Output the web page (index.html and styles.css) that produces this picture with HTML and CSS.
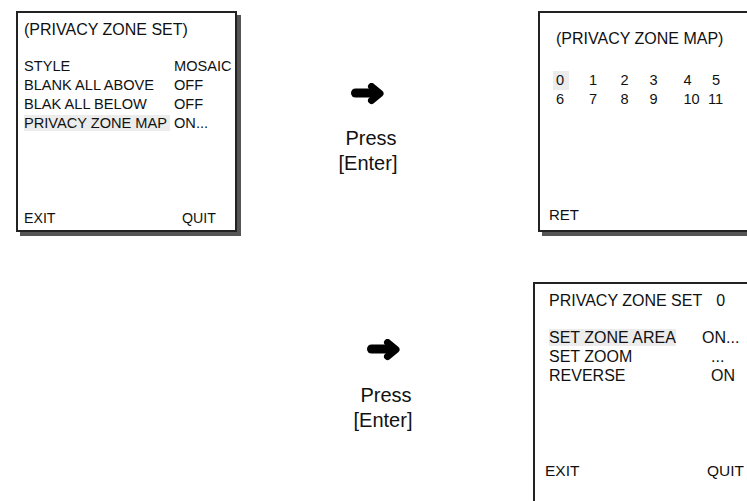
FILE: index.html
```html
<!DOCTYPE html>
<html>
<head>
<meta charset="utf-8">
<link rel="stylesheet" href="styles.css">
</head>
<body>
<div class="page">
  <div class="row row-top">
    <div class="box box-set">
      <div class="title">(PRIVACY ZONE SET)</div>
      <div class="menu">
        <span>STYLE</span><span>MOSAIC</span>
        <span>BLANK ALL ABOVE</span><span>OFF</span>
        <span>BLAK ALL BELOW</span><span>OFF</span>
        <span><span class="hl">PRIVACY ZONE MAP</span></span><span>ON...</span>
      </div>
      <div class="foot foot-set"><span>EXIT</span><span>QUIT</span></div>
    </div>

    <div class="mid mid-top">
      <svg class="arrow" width="34" height="22" viewBox="0 0 34 22">
        <line x1="4.5" y1="10" x2="26" y2="10" stroke="#000" stroke-width="9" stroke-linecap="round"/>
        <polyline points="20.5,3.5 29,10.5 20.5,17.5" fill="none" stroke="#000" stroke-width="7" stroke-linecap="round" stroke-linejoin="round"/>
      </svg>
      <div class="press">Press</div>
      <div class="enter">[Enter]</div>
    </div>

    <div class="box box-map">
      <div class="title title-map">(PRIVACY ZONE MAP)</div>
      <div class="grid">
        <span><span class="hl hl-cell">0</span></span><span>1</span><span>2</span><span>3</span><span>4</span><span>5</span>
        <span>6</span><span>7</span><span>8</span><span>9</span><span>10</span><span class="shift">11</span>
      </div>
      <div class="ret">RET</div>
    </div>
  </div>

  <div class="row row-bottom">
    <div class="mid mid-bottom">
      <svg class="arrow" width="34" height="22" viewBox="0 0 34 22">
        <line x1="4.5" y1="10" x2="26" y2="10" stroke="#000" stroke-width="9" stroke-linecap="round"/>
        <polyline points="20.5,3.5 29,10.5 20.5,17.5" fill="none" stroke="#000" stroke-width="7" stroke-linecap="round" stroke-linejoin="round"/>
      </svg>
      <div class="press">Press</div>
      <div class="enter">[Enter]</div>
    </div>

    <div class="box box-zone">
      <div class="zone-title"><span>PRIVACY ZONE SET</span><span class="zone-num">0</span></div>
      <div class="zone-menu">
        <span><span class="hl">SET ZONE AREA</span></span><span>ON...</span>
        <span>SET ZOOM</span><span class="v2">...</span>
        <span>REVERSE</span><span class="v2">ON</span>
      </div>
      <div class="foot foot-zone"><span>EXIT</span><span>QUIT</span></div>
    </div>
  </div>
</div>
</body>
</html>
```

FILE: styles.css
```css
html, body {
  margin: 0;
  padding: 0;
  background: #fff;
}
body {
  width: 747px;
  height: 501px;
  overflow: hidden;
  font-family: "Liberation Sans", Arial, sans-serif;
  color: #111;
}
.page {
  display: flex;
  flex-direction: column;
}
.row {
  display: flex;
  align-items: flex-start;
}
.row-top {
  padding: 11px 0 0 16px;
}
.row-bottom {
  margin-top: 50px;
  padding-left: 343px;
}
.box {
  box-sizing: border-box;
  border: 2px solid #222;
  box-shadow: 4px 4px 0 #555;
  background: #fff;
  display: flex;
  flex-direction: column;
  flex-shrink: 0;
}
.title {
  font-size: 16px;
  line-height: 19px;
}
.hl {
  background: #ececec;
}

/* box 1 */
.box-set {
  width: 221px;
  height: 221px;
  padding: 7px 0 2px 6px;
}
.menu {
  margin-top: 18px;
  display: grid;
  grid-template-columns: 150px auto;
  font-size: 14.6px;
  line-height: 19px;
}
.menu .hl {
  padding-right: 3px;
}
.foot {
  display: grid;
  line-height: 19px;
}
.foot-set {
  margin-top: auto;
  grid-template-columns: 158px auto;
  font-size: 14.2px;
}

/* middle */
.mid {
  width: 80px;
  display: flex;
  flex-direction: column;
  align-items: center;
  font-size: 20px;
  line-height: 25px;
  flex-shrink: 0;
}
.mid-top {
  margin-left: 91px;
  padding-top: 72px;
}
.mid-bottom {
  padding-top: 57px;
}
.arrow {
  display: block;
  margin-bottom: 21px;
}
.mid-bottom .arrow {
  margin-bottom: 22px;
  margin-left: 2px;
}
.press {
  margin-left: 6px;
}

/* box 2 */
.box-map {
  margin-left: 130px;
  width: 240px;
  height: 221px;
  padding: 16px 0 6px 16px;
}
.grid {
  margin-top: 23px;
  display: grid;
  grid-template-columns: 33px 31.5px 29px 34px 28.5px auto;
  font-size: 14.6px;
  line-height: 19px;
}
.hl-cell {
  display: inline-block;
  margin-left: -3px;
  padding: 0 5px 0 3px;
}
.shift {
  margin-left: -4px;
}
.ret {
  margin-top: auto;
  margin-left: -7px;
  font-size: 15px;
  line-height: 19px;
}

/* box 3 */
.box-zone {
  margin-left: 110px;
  width: 240px;
  height: 240px;
  padding: 7px 0 0 14px;
}
.zone-title {
  display: flex;
  font-size: 16px;
  line-height: 19px;
}
.zone-num {
  margin-left: 14px;
}
.zone-menu {
  margin-top: 18px;
  display: grid;
  grid-template-columns: 153px auto;
  font-size: 16px;
  line-height: 19px;
}
.zone-menu .v2 {
  padding-left: 9px;
}
.foot-zone {
  margin-top: 76px;
  margin-left: -4px;
  grid-template-columns: 162px auto;
  font-size: 15.5px;
}
```
